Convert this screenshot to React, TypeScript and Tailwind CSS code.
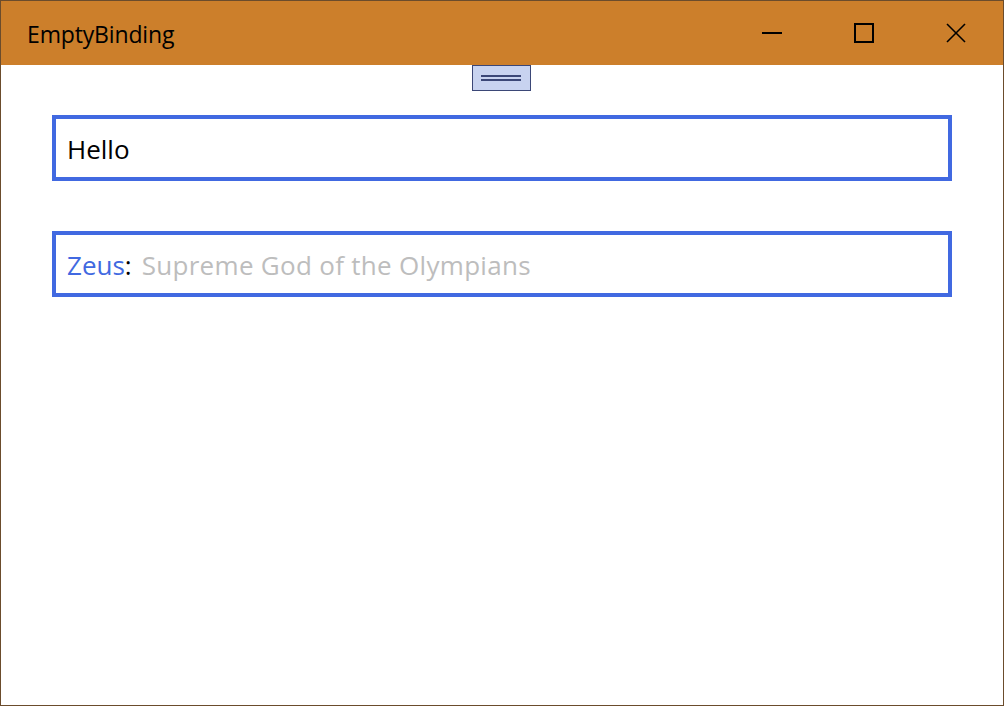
import React from "react";

const TitleButton = ({ children }: { children: React.ReactNode }) => (
    <div className="w-[92px] h-full flex items-center justify-center">{children}</div>
);

export default function App() {
    return (
        <div
            className="w-[1004px] h-[706px] border border-[#6b4c2c] bg-white flex flex-col"
            style={{ fontFamily: '"Open Sans", "Noto Sans", sans-serif' }}
        >
            <div className="h-[64px] bg-[#cc7f2b] flex items-center shrink-0">
                <div className="pl-[26px] pt-[2px] flex-1 text-[23px] text-black tracking-[-0.15px]">EmptyBinding</div>
                <div className="flex h-full mr-[1px]">
                    <TitleButton>
                        <svg width="20" height="20" viewBox="0 0 20 20">
                            <line x1="0" y1="10" x2="20" y2="10" stroke="black" strokeWidth="2" />
                        </svg>
                    </TitleButton>
                    <TitleButton>
                        <svg width="20" height="20" viewBox="0 0 20 20">
                            <rect x="1" y="1" width="18" height="18" fill="none" stroke="black" strokeWidth="2" />
                        </svg>
                    </TitleButton>
                    <TitleButton>
                        <svg width="20" height="20" viewBox="0 0 20 20">
                            <line x1="1" y1="1" x2="19" y2="19" stroke="black" strokeWidth="1.6" />
                            <line x1="19" y1="1" x2="1" y2="19" stroke="black" strokeWidth="1.6" />
                        </svg>
                    </TitleButton>
                </div>
            </div>

            <div className="flex justify-center">
                <div className="w-[59px] h-[26px] border border-[#3b4777] bg-[#c8d3f0] flex flex-col items-center justify-center gap-[2px] ml-[-2px]">
                    <div className="w-[40px] h-[2px] bg-[#3b4777]" />
                    <div className="w-[40px] h-[2px] bg-[#3b4777]" />
                </div>
            </div>

            <div className="pl-[51px] pr-[51px] pt-[24px] flex flex-col gap-[50px]">
                <div className="h-[66px] border-4 border-[#4169e1] flex items-center pl-[11px] pt-[3px] text-[26px] text-black">
                    Hello
                </div>
                <div className="h-[66px] border-4 border-[#4169e1] flex items-center pl-[11px] pt-[3px] text-[26px]">
                    <span className="text-[#4169e1]">Zeus</span>
                    <span className="text-black">:</span>
                    <span className="text-[#bdbdbd] ml-[10px] tracking-[0.3px]">Supreme God of the Olympians</span>
                </div>
            </div>
        </div>
    );
}
